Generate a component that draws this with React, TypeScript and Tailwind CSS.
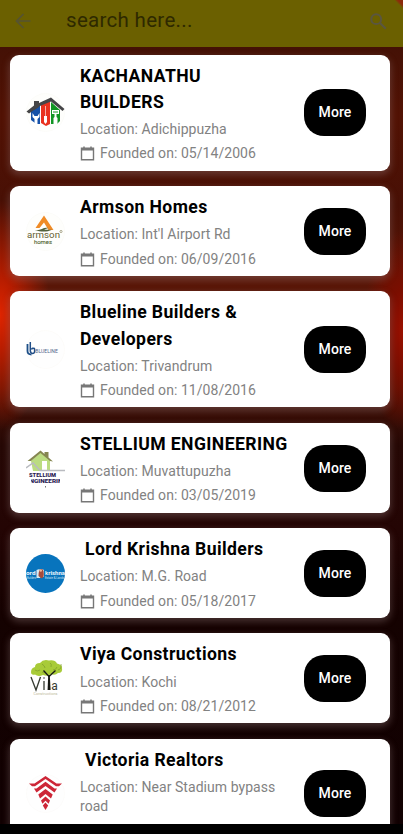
import React from "react";

type Company = {
  name: string;
  location: string;
  founded?: string;
  logo: React.ReactNode;
  indent?: boolean;
};

function KachanathuLogo() {
  return (
    <svg viewBox="0 0 39 39" className="size-[39px]">
      <circle cx="19.5" cy="19.5" r="19" fill="#fefefc" stroke="#f8f8f4" strokeWidth=".5" />
      <path d="M5 18 L14 12 V31 L11 31 L9 30 L5 27Z" fill="#1551a8" />
      <path d="M15 12 L24 8 V31 L20 33 L15 30Z" fill="#e9321f" />
      <path d="M25 9 L34 17 V28 L31 31 L25 31Z" fill="#119524" />
      <path d="M6.5 20v4l2 2v6h3v-6l2-2v-4l-2 3h-3z" fill="#fff" />
      <path d="M19.2 13v10h-1.2v6l1.5 2 1.5-2v-6h-1.2V13z" fill="#fff" />
      <path d="M26 17h7v4h-7zM28.5 21h2v3l1 1v6h-4v-6l1-1z" fill="#fff" />
      <path d="M27 19h5" stroke="#119524" strokeWidth="1" />
      <path d="M0.5 18.5 L8 12.5 V8h5v2L25 4.5 L38.5 16 L36.5 18 L25 8.5 L14 13 L3 20.5Z" fill="#454547" />
      <path d="M8 8h5v6l-5 3z" fill="#454547" />
    </svg>
  );
}

function ArmsonLogo() {
  return (
    <svg viewBox="0 0 39 39" className="size-[39px] overflow-visible">
      <circle cx="19.5" cy="19.5" r="19" fill="#fefefc" stroke="#f8f8f4" strokeWidth=".5" />
      <path d="M18 3.5 L27.5 18 H22.5 L18 10.5 L13.5 16 H9.5Z" fill="#f08b26" />
      <path d="M9 18c6 1 8-3 13-2l-4 1.7h8c-5 2.5-11 2.5-17 .3z" fill="#52613c" />
      <text x="1" y="26" textLength="33" lengthAdjust="spacingAndGlyphs" fontSize="9.5" fill="#655e31" fontFamily="Roboto, sans-serif">armson</text>
      <circle cx="35" cy="19.5" r="1.1" fill="none" stroke="#655e31" strokeWidth=".5" />
      <text x="8" y="32.3" textLength="18" lengthAdjust="spacingAndGlyphs" fontSize="6" fill="#4f622c" stroke="#4f622c" strokeWidth=".1" fontFamily="Roboto, sans-serif">homes</text>
    </svg>
  );
}

function BluelineLogo() {
  return (
    <svg viewBox="0 0 39 39" className="size-[39px]">
      <circle cx="19.5" cy="19.5" r="19" fill="#fefefe" stroke="#faf9f5" strokeWidth=".5" />
      <path d="M1.5 14v7q0 3.5 4 3.5" fill="none" stroke="#1d4f88" strokeWidth="1.8" />
      <path d="M4.3 12v8.5q0 3 2.5 3t1.6-5q-2-1-3 1" fill="none" stroke="#214f88" strokeWidth="1.5" />
      <text x="9.3" y="23.3" textLength="22.5" lengthAdjust="spacingAndGlyphs" fontSize="5.4" fill="#51658a" fontFamily="Roboto, sans-serif">BLUELINE</text>
    </svg>
  );
}

function StelliumLogo() {
  return (
    <svg viewBox="0 0 39 39" className="size-[39px]">
      <path d="M5 12 L15 3 L24 11 V22 H7Z" fill="#bbdc81" />
      <path d="M1.5 12 L14.5 1.5 L18.5 5V3h4v5.500l4.5 4-3-.5L14.5 4 5 12z" fill="#858650" />
      <path d="M16 12h5v10h-5z" fill="#fff" />
      <path d="M0 19 L7 14 L14 21.5 H39" fill="none" stroke="#b9bbc0" strokeWidth="1.5" />
      <text x="3" y="28.2" textLength="27" lengthAdjust="spacingAndGlyphs" fontSize="5.3" fontWeight="900" fill="#292052" fontFamily="Roboto, sans-serif">STELLIUM</text>
      <svg x="5" y="29" width="29" height="6" viewBox="5 29 29 6">
        <text x="3.5" y="34.3" textLength="33" lengthAdjust="spacingAndGlyphs" fontSize="5.3" fontWeight="900" fill="#292052" fontFamily="Roboto, sans-serif">NGINEERIN</text>
      </svg>
      <path d="M19.5 37v1.5" stroke="#777" />
    </svg>
  );
}

function KrishnaLogo() {
  return (
    <svg viewBox="0 0 39 39" className="size-[39px] rounded-full bg-[#0874bd]">
      <text x="0" y="21.3" textLength="9.5" lengthAdjust="spacingAndGlyphs" fontSize="6.2" fontWeight="700" fill="#eef7ff" fontFamily="Roboto, sans-serif">ord</text>
      <text x="19" y="21.3" textLength="20" lengthAdjust="spacingAndGlyphs" fontSize="6.2" fontWeight="700" fill="#eef7ff" fontFamily="Roboto, sans-serif">krishna</text>
      <path d="M10.5 16l3-1 1 9h-4zM16 15l2 1v7h-2z" fill="#d9e8ef" />
      <path d="M12.5 22q0-7 3-7t2 8l-2 1.5z" fill="#a54b3b" />
      <circle cx="14.7" cy="16.5" r="1.3" fill="#f0b79a" />
      <text x="1" y="25" textLength="9" lengthAdjust="spacingAndGlyphs" fontSize="3.1" fill="#d1e5f3" fontFamily="Roboto, sans-serif">Builders</text>
      <text x="19" y="25" textLength="19" lengthAdjust="spacingAndGlyphs" fontSize="3.1" fill="#d1e5f3" fontFamily="Roboto, sans-serif">Estate &amp; Lands</text>
    </svg>
  );
}

function ViyaLogo() {
  return (
    <svg viewBox="0 0 39 39" className="size-[39px]">
      <path d="M5 13q0-4 4-5 0-4 5-4 3-4 9-2.5 6-1 8 3 5 1 5 4.500 1 5-4 5-3 3-7 1-3 3-8 1-5 2-8-.5-4 1-4-2.5z" fill="#a8cb38" />
      <path d="M9 11q2 2 5 0m2-6q3 2 3 4m5-5q2 1 1 4m6 0q-1 3-4 3m-11 2q2 2 4 0m15-8q1 5-3 6" fill="none" stroke="#7c9c2a" strokeWidth=".7" />
      <path d="M17.5 11.5l5.5 6L29.5 11.5" fill="none" stroke="#171914" strokeWidth="1.3" />
      <path d="M22.2 16h1.6l.8 15h-3z" fill="#171914" />
      <path d="M5 18l5 13 4.5-13M18 22v9" fill="none" stroke="#363b32" strokeWidth="1.3" />
      <circle cx="18" cy="19" r=".8" fill="#363b32" />
      <text x="25.3" y="31" fontSize="12" fill="#363b32" fontFamily="Roboto, sans-serif">a</text>
      <text x="7.5" y="35.5" textLength="24" lengthAdjust="spacingAndGlyphs" fontSize="3.7" fill="#bdb999" fontFamily="Roboto, sans-serif">Constructions</text>
    </svg>
  );
}

function VictoriaLogo() {
  return (
    <svg viewBox="0 0 39 39" className="size-[39px]">
      <circle cx="19.5" cy="19.5" r="19" fill="#fefefe" stroke="#faf9f7" strokeWidth=".5" />
      <g fill="#cd2637">
        <path d="M3 9.5h5.500L19.500 2 30.500 9.500H36l-3 2.800h-3L19.500 5 9 12.300H6z" />
        <path d="M8 14.500h2.500l9-6.800 9 6.800H31l-2.500 4-9-6.500-9 6.500z" />
        <path d="M12.300 20.500l7.200-5.500 7.200 5.500-1.700 4-5.500-4.500-5.500 4.500z" />
        <path d="M15 26.500l4.500-4 4.500 4-1.400 3.300-3.100-3-3.100 3z" />
        <path d="M19.500 28.500l2.700 3-2.700 4.500-2.700-4.500z" />
      </g>
    </svg>
  );
}

const companies: Company[] = [
  { name: "KACHANATHU\nBUILDERS", location: "Adichippuzha", founded: "05/14/2006", logo: <KachanathuLogo /> },
  { name: "Armson Homes", location: "Int'l Airport Rd", founded: "06/09/2016", logo: <ArmsonLogo /> },
  { name: "Blueline Builders & Developers", location: "Trivandrum", founded: "11/08/2016", logo: <BluelineLogo /> },
  { name: "STELLIUM ENGINEERING", location: "Muvattupuzha", founded: "03/05/2019", logo: <StelliumLogo /> },
  { name: "Lord Krishna Builders", location: "M.G. Road", founded: "05/18/2017", logo: <KrishnaLogo />, indent: true },
  { name: "Viya Constructions", location: "Kochi", founded: "08/21/2012", logo: <ViyaLogo /> },
  { name: "Victoria Realtors", location: "Near Stadium bypass road", logo: <VictoriaLogo />, indent: true },
];

function CompanyCard({ company }: { company: Company }) {
  return (
    <article className="flex shrink-0 items-center rounded-[9px] bg-white pt-[8px] pr-[23.5px] pb-[7.3px] pl-[15.5px] shadow-[0_3px_7px_1px_rgba(150,125,125,0.36)]">
      <div className="size-[39px] shrink-0">{company.logo}</div>
      <div className="ml-[15.1px] w-[209px] shrink-0">
        <h2 className={`text-[17.6px] leading-[26.2px] font-bold tracking-[0.4px] whitespace-pre-line text-black ${company.indent ? "pl-[5px]" : ""}`}>
          {company.name}
        </h2>
        <p className="mt-[5px] text-[14px] leading-[19px] tracking-[0.05px] text-[#828282]">Location: {company.location}</p>
        <div className="mt-[5.3px] flex h-[19px] items-center gap-[5px] text-[14px] leading-[19px] tracking-[0.05px] whitespace-nowrap text-[#828282]">
          {company.founded && (
            <>
              <svg viewBox="0 0 15 15" className="size-[15px] shrink-0" fill="none" stroke="#777">
                <path d="M1.5 2.3h12v11.5h-12zM1.5 3.7h12" strokeWidth="1.4" />
                <path d="M4 .5v2M11 .5v2" strokeWidth="1.5" />
              </svg>
              <span>Founded on: {company.founded}</span>
            </>
          )}
        </div>
      </div>
      <button className="ml-auto h-[47px] w-[62px] shrink-0 rounded-[20px] bg-black text-[14px] font-medium tracking-[0.1px] text-white">
        More
      </button>
    </article>
  );
}

export default function App() {
  return (
    <div className="flex h-[834px] w-[403px] flex-col overflow-hidden bg-black font-[Roboto,'Noto_Sans',sans-serif]">
      <div className="flex h-[823.5px] flex-col overflow-hidden bg-[radial-gradient(ellipse_50px_115px_at_0px_315px,#df2500_0%,#b91d00_30%,transparent_100%),radial-gradient(ellipse_40px_100px_at_403px_330px,#9a1000_0%,#7b0e00_40%,transparent_100%),linear-gradient(180deg,#3b1006_0%,#521204_14%,#481005_25%,#5a1607_34%,#491307_47%,#260805_54%,#240504_64%,#150201_75%,#110102_100%)]">
        <header className="flex h-[46.5px] shrink-0 items-center bg-[linear-gradient(45deg,#6b6000_98%,#8d2b0b_98.8%)] pr-[16px] pb-[6px] pl-[15px]">
          <svg viewBox="0 0 16 16" className="mt-[2px] size-[16px]" fill="none" stroke="#565332" strokeWidth="1.7">
            <path d="M15.5 8H2M8.5 1L1.5 8l7 7" />
          </svg>
          <span className="mt-[-1px] ml-[35px] text-[20.5px] leading-[24px] tracking-[0.3px] text-[#2e2900]">search here...</span>
          <svg viewBox="0 0 17 17" className="mt-[2px] ml-auto size-[17px]" fill="none" stroke="#5a5640" strokeWidth="2">
            <circle cx="6.2" cy="6.2" r="4.9" />
            <path d="M9.8 9.8l6 6" />
          </svg>
        </header>
        <main className="flex flex-col gap-[15.5px] pt-[8px] pr-[13.5px] pl-[10.4px]">
          {companies.map((company) => (
            <CompanyCard key={company.name} company={company} />
          ))}
        </main>
      </div>
    </div>
  );
}
